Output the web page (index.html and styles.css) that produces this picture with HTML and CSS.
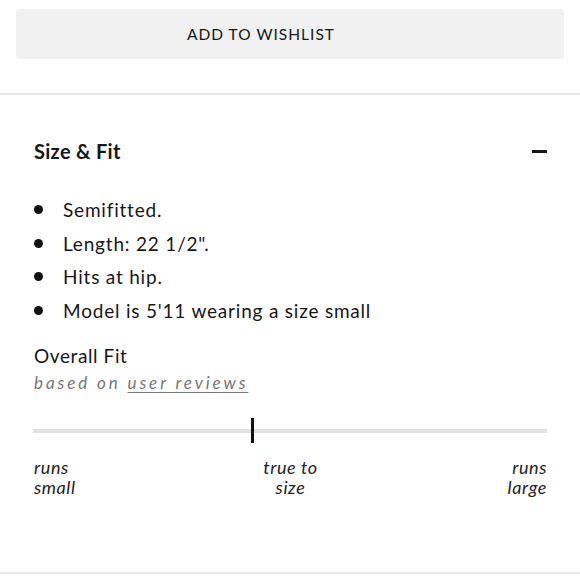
FILE: index.html
```html
<!DOCTYPE html>
<html>
<head>
<meta charset="utf-8">
<link rel="stylesheet" href="styles.css">
</head>
<body>
  <div class="actions">
    <button class="wishlist">ADD TO WISHLIST</button>
  </div>
  <section class="panel">
    <div class="panel-head">
      <h2 class="panel-title">Size &amp; Fit</h2>
      <span class="toggle"></span>
    </div>
    <ul class="details">
      <li>Semifitted.</li>
      <li>Length: 22 1/2".</li>
      <li>Hits at hip.</li>
      <li>Model is 5'11 wearing a size small</li>
    </ul>
    <div class="fit">
      <div class="fit-title">Overall Fit</div>
      <div class="fit-sub">based on <a class="fit-link">user reviews</a></div>
      <div class="track"><span class="marker"></span></div>
      <div class="labels">
        <span class="lab lab-left">runs<br>small</span>
        <span class="lab lab-mid">true to<br>size</span>
        <span class="lab lab-right">runs<br>large</span>
      </div>
    </div>
  </section>
</body>
</html>
```
FILE: styles.css
```css
html, body {
  margin: 0;
  padding: 0;
  background: #fff;
  color: #161616;
  font-family: "Lato", "Open Sans", sans-serif;
}
.actions {
  padding: 9px 16px 0;
}
.wishlist {
  display: block;
  width: 100%;
  height: 50px;
  border: none;
  border-radius: 3px;
  background: #f1f1f1;
  font-family: inherit;
  font-size: 15.5px;
  letter-spacing: 1px;
  color: #161616;
  padding: 0 58px 0 0;
}
.panel {
  margin-top: 34px;
  border-top: 2px solid #e6e6e6;
  border-bottom: 2px solid #e6e6e6;
  padding: 0 33px 0 34px;
  height: 481px;
  box-sizing: border-box;
}
.panel-head {
  display: flex;
  justify-content: space-between;
  align-items: center;
  margin-top: 43px;
  height: 26px;
}
.panel-title {
  margin: 0;
  font-size: 20px;
  font-weight: 700;
  letter-spacing: 0.3px;
}
.toggle {
  width: 15px;
  height: 3px;
  background: #161616;
}
.details {
  list-style: none;
  margin: 29px 0 0;
  padding: 0;
}
.details li {
  position: relative;
  padding-left: 29px;
  font-size: 19px;
  letter-spacing: 0.8px;
  line-height: 33.5px;
  height: 33.5px;
}
.details li::before {
  content: "";
  position: absolute;
  left: 0;
  top: 12px;
  width: 9px;
  height: 9px;
  border-radius: 50%;
  background: #111;
}
.fit {
  margin-top: 16px;
}
.fit-title {
  font-size: 19px;
  letter-spacing: 0.6px;
  line-height: 26px;
}
.fit-sub {
  font-size: 17px;
  font-style: italic;
  letter-spacing: 2.9px;
  color: #777;
  line-height: 28px;
}
.fit-link {
  text-decoration: underline;
  text-underline-offset: 3px;
  color: #777;
}
.track {
  position: relative;
  margin-top: 32px;
  height: 4px;
  background: #e1e1e1;
  margin-left: -1px;
}
.marker {
  position: absolute;
  left: 218px;
  top: -11px;
  width: 3px;
  height: 25px;
  background: #111;
}
.labels {
  display: flex;
  justify-content: space-between;
  margin-top: 24px;
}
.lab {
  font-size: 18px;
  font-style: italic;
  letter-spacing: 0.6px;
  line-height: 20px;
  color: #222;
}
.lab-left { text-align: left; width: 90px; }
.lab-mid { text-align: center; }
.lab-right { text-align: right; width: 90px; }
```
